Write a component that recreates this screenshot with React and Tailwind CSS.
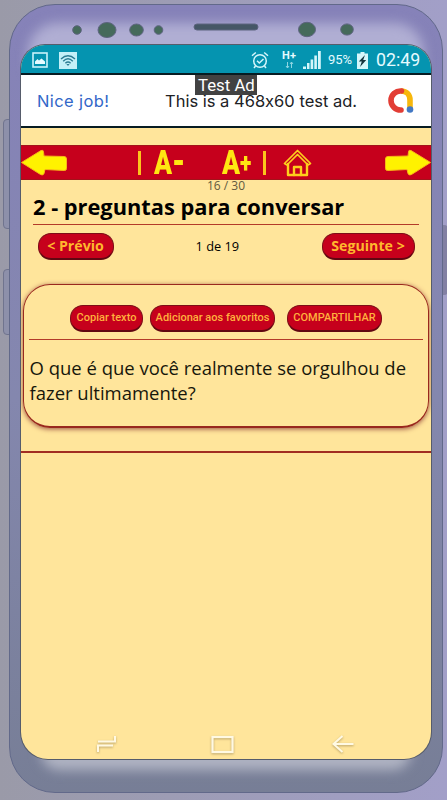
import React from "react";

function ToolbarArrow({ className }) {
  return (
    <svg className={className} width="46" height="28" viewBox="0 0 46 28">
      <path
        d="M0.500 13.500 L20 1.500 Q22.500 .5 22.500 3 L23 7 L43.500 7.500 Q45.500 7.700 45.500 10 V19.500 Q45.500 21.500 43.500 21.500 L24 20.500 L23 24.500 Q22 27 19.500 25.500 Z"
        fill="#fff200"
        stroke="#f7b518"
        strokeWidth="1"
      />
    </svg>
  );
}

function StatusBar() {
  return (
    <div className="flex h-[28px] shrink-0 items-center bg-[#0594b0] pt-[2px] pr-[10px] pl-[11px] font-['Roboto',sans-serif] text-[#e6fbff]">
      <svg width="16" height="16" viewBox="0 0 16 16">
        <rect x="1" y="1" width="14" height="14" fill="none" stroke="#c9f2fa" strokeWidth="1.600" />
        <path d="M3 12 V9.500 L5.500 7 L7 8.500 L9.500 6.500 L13 9.500 V12 Z" fill="#e6fbff" />
      </svg>
      <svg className="ml-[11px]" width="18" height="17" viewBox="0 0 18 17">
        <rect width="18" height="17" fill="#c3f0f8" />
        <g fill="none" stroke="#2b7c93" strokeWidth="1.400">
          <path d="M2 7 Q9 0.500 16 7" />
          <path d="M4.200 9.200 Q9 4.500 13.800 9.200" />
          <path d="M6.400 11.200 Q9 8.700 11.600 11.200" />
        </g>
        <path d="M7.400 12 H10.600 L9 14 Z" fill="#2b7c93" />
      </svg>
      <svg className="ml-auto" width="18" height="18" viewBox="0 0 18 18" fill="none" stroke="#d5f6fb" strokeWidth="1.500">
        <circle cx="9" cy="10" r="6.300" />
        <path d="M1 4.800 L4.800 1.500 M13.200 1.500 L17 4.800 M6 9.800 L8.300 12 L12.500 8 M4.500 15 L3 17 M13.500 15 L15 17" />
      </svg>
      <div className="ml-[12px] flex w-[16px] flex-col items-center">
        <span className="text-[11px] leading-[10px] font-bold">H+</span>
        <svg width="9" height="8" viewBox="0 0 9 8" fill="none" stroke="#8ed5e2">
          <path d="M2.500 1 V7 M1 5 L2.500 7 L4 5 M6.500 7 V1 M5 3 L6.500 1 L8 3" />
        </svg>
      </div>
      <svg className="ml-[6px]" width="18" height="18" viewBox="0 0 18 18" fill="#d5f6fb">
        <path d="M0 15.500 H3 V18 H0 Z M4 12 H6.500 V18 H4 Z M7.600 8.500 H10.200 V18 H7.600 Z M11.300 4.500 H13.900 V18 H11.300 Z M15 0 H17.800 V18 H15 Z" />
      </svg>
      <span className="ml-[7px] w-[24px] text-[13px] whitespace-nowrap">95%</span>
      <svg className="ml-[5px]" width="11" height="17" viewBox="0 0 11 17">
        <path d="M3.500 0 H7.500 V1.500 H11 V17 H0 V1.500 H3.500 Z" fill="#d5f6fb" />
        <path d="M8 3 L1.800 9.500 H4.800 L3 15 L9.200 8 H6.200 Z" fill="#17353f" />
      </svg>
      <span className="ml-[8px] w-[45px] text-[17.800px] whitespace-nowrap">02:49</span>
    </div>
  );
}

function AdBanner() {
  return (
    <div className="relative flex h-[55px] shrink-0 items-center border-y-2 border-[#071c22] bg-white font-['Inter',sans-serif] [font-feature-settings:'calt'_0]">
      <span className="ml-[16px] w-[128px] pt-[1px] text-[16.500px] tracking-[0.400px] whitespace-nowrap text-[#3267c8]">Nice job!</span>
      <span className="w-[210px] pt-[1px] text-[16.500px] whitespace-nowrap text-[#202124]">This is a 468x60 test ad.</span>
      <svg className="ml-[12px]" width="28" height="27" viewBox="0 0 28 27" fill="none">
        <path d="M14 4 C20 4 23 8 23 13 V22" stroke="#f7b70c" strokeWidth="5.600" />
        <path d="M14.500 4 A9.500 9.500 0 0 0 4 13.500 A9.500 9.500 0 0 0 14 23" stroke="#e23d35" strokeWidth="5.600" strokeLinecap="round" />
        <circle cx="23" cy="22.500" r="3.300" fill="#4278c4" />
      </svg>
      <span className="absolute top-0 left-[174px] h-[20px] w-[62px] bg-[#424242] pl-[3px] font-['Roboto',sans-serif] text-[16.800px] leading-[20px] whitespace-nowrap text-white">
        Test Ad
      </span>
    </div>
  );
}

function Toolbar() {
  return (
    <div className="mt-[17px] flex h-[35px] shrink-0 items-center border-y border-[#a3131a] bg-[#c6001c] font-['Roboto',sans-serif] text-[#ffe712]">
      <ToolbarArrow />
      <span className="ml-[71px] h-[24px] w-[3px] bg-[#fbc51c]" />
      <span className="ml-[13px] w-[31px] origin-left scale-x-[0.780] text-[34px] leading-[33px] font-black whitespace-nowrap">
        A<span className="text-[38px] leading-[20px]">-</span>
      </span>
      <span className="ml-[37px] w-[31px] origin-left scale-x-[0.780] text-[34px] leading-[33px] font-black whitespace-nowrap">
        A<span className="align-[2px] text-[27px] leading-[20px]">+</span>
      </span>
      <span className="ml-[10px] h-[24px] w-[3px] bg-[#fbc51c]" />
      <svg className="ml-[17px]" width="29" height="28" viewBox="0 0 29 28" fill="none" stroke="#fdcf1c" strokeWidth="2.400" strokeLinejoin="round" strokeLinecap="round">
        <path d="M5 15 V26 H24 V15" />
        <path d="M1.500 14.500 L14.500 1.500 L27.500 14.500 L25 16 L14.500 5.500 L4 16 Z" strokeWidth="1.700" />
        <path d="M11 26 V18 H18 V26" />
      </svg>
      <ToolbarArrow className="ml-auto -scale-x-100" />
    </div>
  );
}

function PillButton({ className, children }) {
  return (
    <button
      className={
        "flex h-[27px] items-center justify-center rounded-[13px] border-[1.500px] border-[#7d0d17] border-b-2 border-b-[#610711] bg-[#c6001c] whitespace-nowrap " +
        className
      }
    >
      {children}
    </button>
  );
}

function QuestionCard() {
  return (
    <div className="mt-[24px] ml-[2px] h-[144px] w-[406px] shrink-0 rounded-[27px] border-[1.500px] border-b-2 border-[#99281e] px-[5px] pt-[20px] shadow-[0_1px_5px_#9b5142]">
      <div className="flex border-b border-[#b33b29] pb-[7px] pl-[41px] font-['Roboto',sans-serif] text-[11px] font-medium text-[#ffb13d]">
        <PillButton className="w-[73px]">Copiar texto</PillButton>
        <PillButton className="ml-[7px] w-[125px]">Adicionar aos favoritos</PillButton>
        <PillButton className="ml-[12px] w-[95px]">COMPARTILHAR</PillButton>
      </div>
      <p className="mt-[14.500px] pl-[0.500px] text-[18.480px] leading-[25.500px] whitespace-nowrap text-[#17170b]">
        O que é que você realmente se orgulhou de
        <br />
        fazer ultimamente?
      </p>
    </div>
  );
}

function NavBar() {
  return (
    <div className="mt-auto flex h-[24px] shrink-0 items-start pl-[75px] drop-shadow-[0_1px_1px_#b9a268]">
      <svg width="21" height="18" viewBox="0 0 21 18" fill="none" stroke="#fff9e3" strokeWidth="2">
        <path d="M2 17 V10.500 H17 M19 1 V6.500 H2" />
      </svg>
      <svg className="ml-[94px]" width="23" height="19" viewBox="0 0 23 19" fill="none" stroke="#fff9e3" strokeWidth="2.200">
        <rect x="1.500" y="2" width="20" height="15" />
      </svg>
      <svg className="ml-[98px]" width="22" height="18" viewBox="0 0 22 18" fill="none" stroke="#fff9e3" strokeWidth="2">
        <path d="M1.500 9 H21.500 M10.500 1 L1.500 9 L10.500 17" />
      </svg>
    </div>
  );
}

export default function App() {
  return (
    <div className="relative h-[800px] w-[447px] overflow-hidden bg-linear-to-r from-[#9a9aa8] to-[#a29fc8] pt-[4px] pl-[9px]">
      <div className="absolute top-[119px] left-[3px] h-[110px] w-[9px] rounded-l-[4px] border border-[#70748e] bg-[#8d90aa]" />
      <div className="absolute top-[269px] left-[3px] h-[66px] w-[9px] rounded-l-[4px] border border-[#70748e] bg-[#8d90aa]" />
      <div className="absolute top-[225px] left-[439px] h-[70px] w-[9px] rounded-r-[4px] bg-[#8280a3]" />

      <div className="relative flex h-[789px] w-[434px] flex-col overflow-hidden rounded-[46px] border border-[#62698a] bg-linear-to-b from-[#8682b9] via-[#8487ae] via-50% to-[#777e96] px-[11px]">
        <div className="absolute inset-x-[18px] top-[18px] h-[48px] rounded-t-[30px] bg-[#b0aed3] blur-[6px]" />
        <div className="absolute inset-x-[30px] bottom-[22px] h-[20px] rounded-b-[30px] bg-[#b0b4c3] blur-[6px]" />
        <div className="relative h-[40px] shrink-0">
          <svg width="410" height="40" viewBox="0 0 410 40" fill="#456a5b" stroke="#5d647f" strokeWidth="1">
            <circle cx="56" cy="25" r="4.300" />
            <ellipse cx="86" cy="25" rx="9" ry="7.500" />
            <ellipse cx="115.500" cy="25" rx="6.800" ry="6" />
            <circle cx="137.500" cy="25" r="4.300" />
            <rect x="173" y="19" width="64" height="6" rx="3" fill="#455766" />
            <ellipse cx="286" cy="24.500" rx="8.500" ry="7.200" />
            <ellipse cx="326" cy="24.500" rx="6.300" ry="5.600" />
          </svg>
        </div>

        <div className="relative flex h-[714px] w-[410px] shrink-0 flex-col overflow-hidden rounded-t-[24px] rounded-b-[27px] bg-[#ffe59b] font-['Open_Sans',sans-serif] text-black shadow-[0_0_0_1px_#565c6b]">
          <StatusBar />
          <AdBanner />
          <Toolbar />
          <div className="h-[13px] shrink-0 text-center text-[12px] leading-[12px] text-[#625a3e]">16 / 30</div>
          <h1 className="mx-[12px] h-[32px] shrink-0 border-b border-[#b33b29] text-[21.800px] leading-[28px] font-bold whitespace-nowrap">
            2 - preguntas para conversar
          </h1>
          <div className="mt-[8px] flex shrink-0 items-center justify-between px-[16.500px] text-[14.200px] font-bold text-[#ffb72d]">
            <PillButton className="w-[76px]">&lt; Prévio</PillButton>
            <span className="w-[44px] text-[12.800px] font-normal whitespace-nowrap text-black">1 de 19</span>
            <PillButton className="w-[93px]">Seguinte &gt;</PillButton>
          </div>
          <QuestionCard />
          <div className="mt-[23px] h-[1.500px] shrink-0 bg-[#a12d22]" />
          <NavBar />
        </div>
      </div>
    </div>
  );
}
